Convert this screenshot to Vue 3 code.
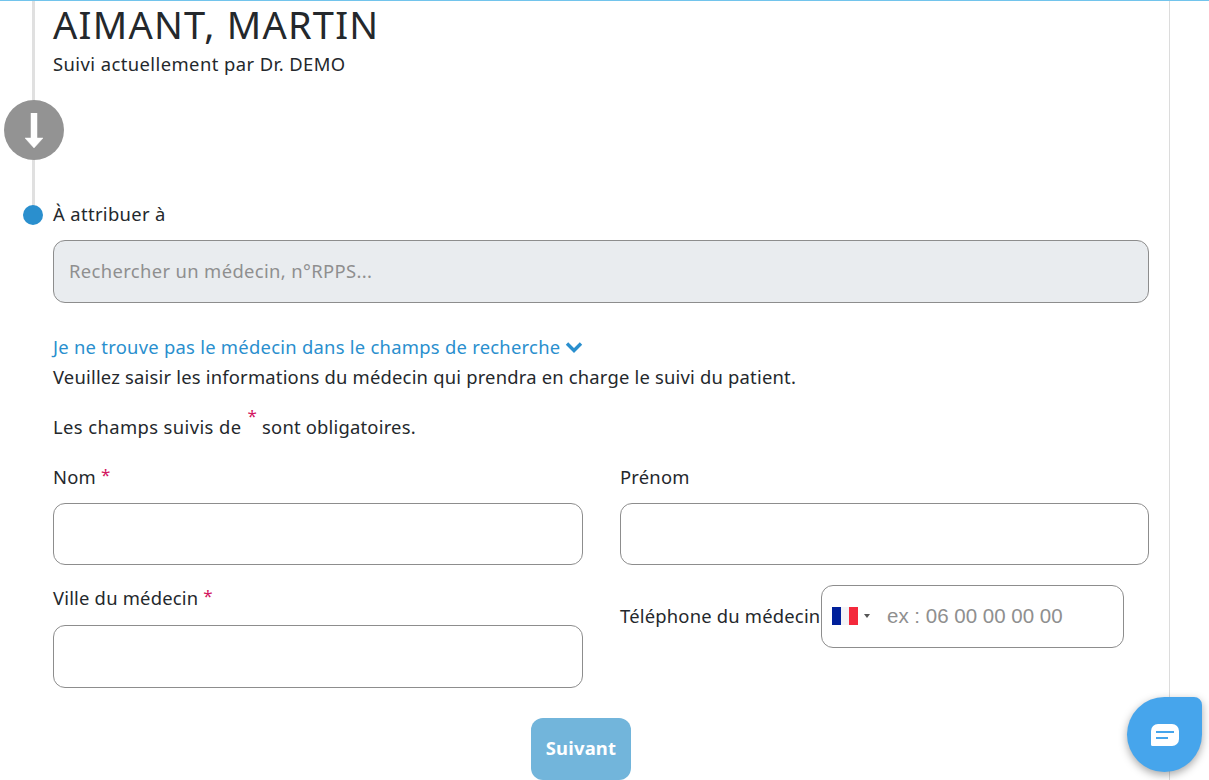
<script setup>
const placeholderSearch = 'Rechercher un médecin, n°RPPS...'
const placeholderPhone = 'ex : 06 00 00 00 00'
</script>

<template>
  <div class="page">
    <div class="rail"></div>
    <main class="content">
      <h1 class="name">AIMANT, MARTIN</h1>
      <p class="current">Suivi actuellement par Dr. DEMO</p>

      <div class="arrow-badge">
        <svg width="18" height="35" viewBox="0 0 18 35" aria-hidden="true">
          <path d="M6 0h6v25h6L9 35 0 25h6z" fill="#fff" stroke="#fff" stroke-width="0.500" stroke-linejoin="round" />
        </svg>
      </div>

      <div class="assign-row">
        <span class="dot"></span>
        <span>À attribuer à</span>
      </div>

      <input class="field search" type="text" disabled :placeholder="placeholderSearch" />

      <a class="toggle">
        Je ne trouve pas le médecin dans le champs de recherche
        <svg width="18" height="12" viewBox="0 0 18 12" aria-hidden="true">
          <path d="M2 2.500l7 7 7-7" fill="none" stroke="#2a8fce" stroke-width="3.400" />
        </svg>
      </a>
      <p class="intro">Veuillez saisir les informations du médecin qui prendra en charge le suivi du patient.</p>
      <p class="required-note"><span class="lead">Les champs suivis de</span> <sup class="star">*</sup> sont obligatoires.</p>

      <div class="form-grid">
        <div class="col">
          <label class="label">Nom <span class="req">*</span></label>
          <input class="field top-field" type="text" />
          <label class="label second">Ville du médecin <span class="req">*</span></label>
          <input class="field" type="text" />
        </div>
        <div class="col">
          <label class="label">Prénom</label>
          <input class="field top-field" type="text" />
          <div class="phone-row">
            <label class="phone-label">Téléphone du médecin</label>
            <div class="phone">
              <svg class="flag" width="26" height="18" viewBox="0 0 26 18" aria-hidden="true">
                <rect width="26" height="18" fill="#f3f3f6" />
                <rect x="0" width="9" height="18" fill="#00209a" />
                <rect x="17" width="9" height="18" fill="#f4293c" />
              </svg>
              <span class="caret"></span>
              <input class="phone-input" type="text" :placeholder="placeholderPhone" />
            </div>
          </div>
        </div>
      </div>

      <div class="actions">
        <button class="next" type="button">Suivant</button>
      </div>
    </main>

    <button class="chat" type="button" aria-label="Chat">
      <svg width="28" height="22" viewBox="0 0 28 22" aria-hidden="true">
        <path d="M7 0h14a7 7 0 0 1 7 7v8a7 7 0 0 1-7 7H1.500A1.500 1.500 0 0 1 0 20.500V7a7 7 0 0 1 7-7z" fill="#fff" />
        <path d="M5 8h18M5 14h12" stroke="#46a5ec" stroke-width="2" />
      </svg>
    </button>
  </div>
</template>

<style>
html, body { margin: 0; background: #fff; overflow: hidden; }
</style>

<style scoped>
.page {
  position: relative;
  box-sizing: border-box;
  width: 1209px;
  height: 780px;
  overflow: hidden;
  background: #fff;
  border-top: 1px solid #72c4ec;
  font-family: "Noto Sans", "Lato", sans-serif;
  font-size: 18.400px;
  letter-spacing: 0.2px;
  color: #24282c;
}
.rail {
  position: absolute;
  left: 32px;
  top: 0;
  width: 3px;
  height: 210px;
  background: #e0e0e0;
}
.content {
  position: relative;
  box-sizing: border-box;
  width: 1170px;
  height: 779px;
  padding: 0 20px 0 53px;
  border-right: 1px solid #dcdcdc;
}
.name {
  margin: 0;
  font-size: 38px;
  line-height: 46px;
  font-weight: 400;
  letter-spacing: 1.250px;
}
.current { margin: 5px 0 0; line-height: 24px; letter-spacing: 0.430px; }
.arrow-badge {
  width: 60px;
  height: 60px;
  margin: 24px 0 0 -49px;
  border-radius: 50%;
  background: #939393;
  display: flex;
  align-items: center;
  justify-content: center;
}
.assign-row {
  display: flex;
  align-items: center;
  gap: 10px;
  margin: 42px 0 0 -30px;
  line-height: 24px;
  letter-spacing: 0.350px;
}
.dot {
  width: 20px;
  height: 20px;
  margin-top: 2px;
  border-radius: 50%;
  background: #2a8fce;
}
.field {
  display: block;
  box-sizing: border-box;
  width: 100%;
  height: 63px;
  padding: 0 15px;
  border: 1px solid #8d8d8d;
  border-radius: 12px;
  background: #fff;
  font: inherit;
  letter-spacing: inherit;
  color: inherit;
  outline: none;
}
.top-field { height: 62px; }
.search {
  margin-top: 14px;
  padding-bottom: 2px;
  background: #e9ecef;
  letter-spacing: 0.360px;
}
.search::placeholder { color: #8f8f8f; opacity: 1; }
.toggle {
  display: flex;
  align-items: center;
  gap: 5px;
  margin-top: 32px;
  line-height: 24px;
  letter-spacing: 0.260px;
  color: #2a8fce;
}
.intro { margin: 6px 0 0; line-height: 24px; }
.required-note { margin: 26px 0 0; line-height: 24px; }
.lead { letter-spacing: 0.400px; }
.star {
  color: #d3155f;
  font-size: 17px;
  line-height: 0;
  vertical-align: 12px;
  margin: 0 0 0 1px;
}
.form-grid {
  display: grid;
  grid-template-columns: 530px 529px;
  column-gap: 37px;
  margin-top: 26px;
}
.label { display: block; line-height: 24px; margin-bottom: 14px; }
.label.second { margin-top: 21px; margin-bottom: 15px; }
.req { color: #d3155f; font-size: 17px; line-height: 0; vertical-align: 3px; }
.phone-row {
  display: flex;
  align-items: center;
  margin-top: 20px;
}
.phone-label { white-space: nowrap; padding-bottom: 2px; }
.phone {
  display: flex;
  align-items: center;
  box-sizing: border-box;
  width: 303px;
  height: 63px;
  margin-left: auto;
  margin-right: 25px;
  padding: 0 0 1px 10px;
  border: 1px solid #8d8d8d;
  border-radius: 12px;
  flex: none;
}
.flag { flex: none; }
.caret {
  flex: none;
  width: 0;
  height: 0;
  margin-left: 6px;
  border-left: 3px solid transparent;
  border-right: 3px solid transparent;
  border-top: 4px solid #555;
}
.phone-input {
  flex: 1;
  min-width: 0;
  margin-left: 17px;
  border: 0;
  outline: none;
  background: transparent;
  font-family: "Liberation Sans", Arial, sans-serif;
  font-size: 20.500px;
  letter-spacing: 0;
  color: inherit;
  padding: 0;
}
.phone-input::placeholder { color: #8f8f8f; opacity: 1; }
.actions {
  display: flex;
  justify-content: center;
  margin-top: 30px;
  padding-right: 40px;
}
.next {
  width: 100px;
  height: 62px;
  padding: 0 0 4px;
  border: 0;
  border-radius: 12px;
  background: #72b5db;
  color: #fff;
  font: inherit;
  font-weight: 700;
  letter-spacing: inherit;
}
.chat {
  position: absolute;
  left: 1127px;
  top: 696px;
  width: 75px;
  height: 75px;
  padding: 0;
  border: 0;
  border-radius: 50% 50% 50% 50% / 50%;
  border-top-right-radius: 8px;
  background: #46a5ec;
  box-shadow: 0 3px 8px rgba(0, 0, 0, 0.35);
  display: flex;
  align-items: center;
  justify-content: center;
}
</style>
